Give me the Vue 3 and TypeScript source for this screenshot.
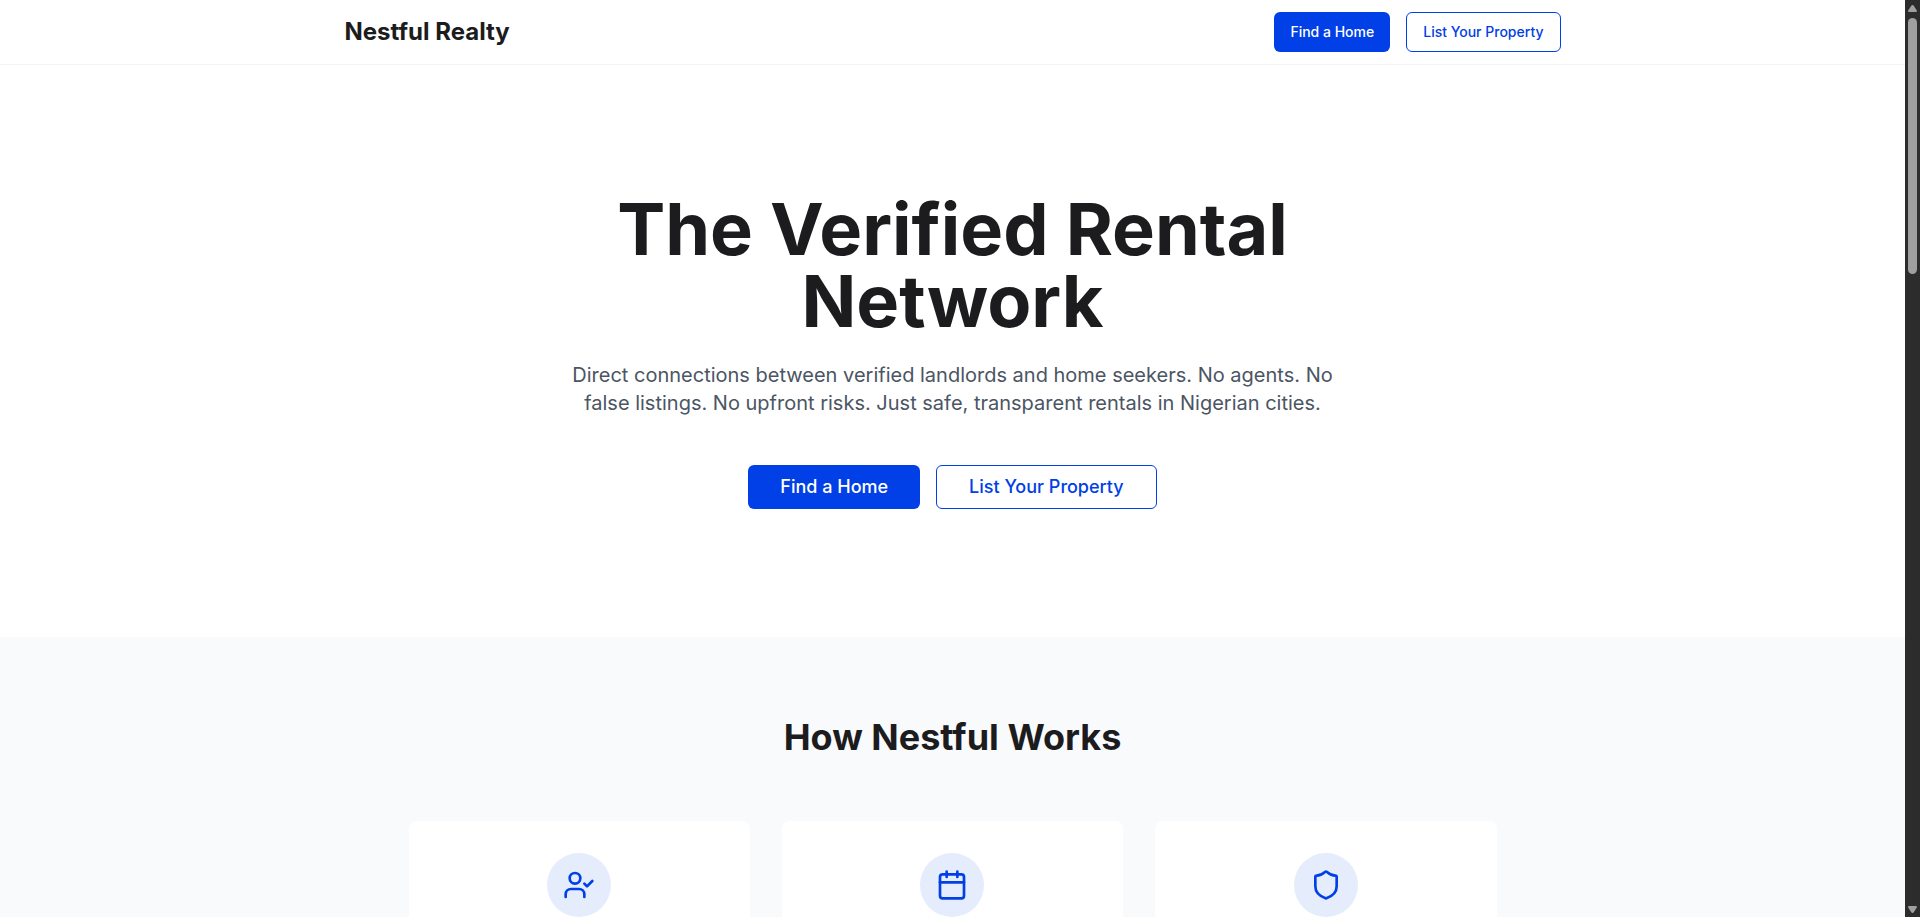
<script setup lang="ts">
type IconName = 'user-check' | 'calendar' | 'shield'

const steps: { icon: IconName }[] = [
  { icon: 'user-check' },
  { icon: 'calendar' },
  { icon: 'shield' },
]
</script>

<template>
  <div class="viewport">
    <div class="page">
      <header class="header">
        <div class="header-inner">
          <span class="brand">Nestful Realty</span>
          <nav class="header-actions">
            <button type="button" class="btn btn-small btn-primary">Find a Home</button>
            <button type="button" class="btn btn-small btn-outline">List Your Property</button>
          </nav>
        </div>
      </header>

      <main>
        <section class="hero">
          <div class="hero-inner">
            <h1 class="hero-title">The Verified Rental Network</h1>
            <p class="hero-text">
              Direct connections between verified landlords and home seekers. No agents. No
              false listings. No upfront risks. Just safe, transparent rentals in Nigerian cities.
            </p>
            <div class="hero-actions">
              <button type="button" class="btn btn-large btn-primary">Find a Home</button>
              <button type="button" class="btn btn-large btn-outline">List Your Property</button>
            </div>
          </div>
        </section>

        <section class="works">
          <div class="works-inner">
            <h2 class="works-title">How Nestful Works</h2>
            <div class="cards">
              <article v-for="step in steps" :key="step.icon" class="card">
                <div class="badge">
                  <svg class="icon" viewBox="0 0 24 24" aria-hidden="true">
                    <template v-if="step.icon === 'user-check'">
                      <path d="m16 11 2 2 4-4" />
                      <path d="M16 21v-2a4 4 0 0 0-4-4H6a4 4 0 0 0-4 4v2" />
                      <circle cx="9" cy="7" r="4" />
                    </template>
                    <template v-else-if="step.icon === 'calendar'">
                      <path d="M8 2v4" />
                      <path d="M16 2v4" />
                      <rect width="18" height="18" x="3" y="4" rx="2" />
                      <path d="M3 10h18" />
                    </template>
                    <path
                      v-else
                      d="M20 13c0 5-3.5 7.5-7.66 8.95a1 1 0 0 1-.67-.01C7.5 20.5 4 18 4 13V6a1 1 0 0 1 1-1c2 0 4.5-1.2 6.24-2.72a1.17 1.17 0 0 1 1.52 0C14.51 3.81 17 5 19 5a1 1 0 0 1 1 1z"
                    />
                  </svg>
                </div>
              </article>
            </div>
          </div>
        </section>
      </main>
    </div>

    <div class="scrollbar" aria-hidden="true">
      <svg class="arrow" viewBox="0 0 9 7"><path d="M4.5 0Q5.3 0 5.8 .8L8.8 5.5Q9.3 7 8 7H1Q-.3 7 .2 5.5L3.2 .8Q3.7 0 4.5 0Z" /></svg>
      <div class="track"><div class="thumb"></div></div>
      <svg class="arrow" viewBox="0 0 9 7"><path d="M4.5 7Q5.3 7 5.8 6.2L8.8 1.5Q9.3 0 8 0H1Q-.3 0 .2 1.5L3.2 6.2Q3.7 7 4.5 7Z" /></svg>
    </div>
  </div>
</template>

<style>
body {
  margin: 0;
}
</style>

<style scoped>
.viewport {
  display: flex;
  height: 100vh;
  overflow: hidden;
  font-family: Inter, "Liberation Sans", sans-serif;
  color: #1c1c1e;
  background: #ffffff;
}

.page {
  flex: 1;
  min-width: 0;
  display: flex;
  flex-direction: column;
  overflow: hidden;
}

.header {
  flex: none;
  border-bottom: 1px solid #f3f4f6;
}

.header-inner {
  box-sizing: border-box;
  max-width: 1280px;
  margin: 0 auto;
  padding: 12px 32px;
  display: flex;
  align-items: center;
  justify-content: space-between;
}

.brand {
  font-size: 24px;
  line-height: 32px;
  font-weight: 700;
}

.header-actions,
.hero-actions {
  display: flex;
  gap: 16px;
}

.hero-actions {
  justify-content: center;
}

.btn {
  box-sizing: border-box;
  border: 1px solid #0040e6;
  border-radius: 6px;
  font-family: inherit;
  font-weight: 500;
  white-space: nowrap;
  cursor: pointer;
}

.btn-primary {
  border: 0;
  background: #0040e6;
  color: #ffffff;
}

.btn-outline {
  background: #ffffff;
  color: #0040e6;
}

.btn-small {
  height: 40px;
  padding: 0 16px;
  font-size: 14px;
  line-height: 20px;
}

.btn-large {
  height: 44px;
  padding: 0 32px;
  font-size: 18px;
  line-height: 28px;
}

main {
  flex: 1;
  display: flex;
  flex-direction: column;
}

.hero {
  padding: 128px 32px;
}

.hero-inner {
  max-width: 832px;
  margin: 0 auto;
  text-align: center;
}

.hero-title {
  margin: 0 0 24px;
  font-size: 72px;
  line-height: 72px;
  font-weight: 700;
}

.hero-text {
  max-width: 768px;
  margin: 0 auto 48px;
  font-size: 20px;
  line-height: 28px;
  color: #4b5563;
}

.works {
  flex: 1;
  padding: 80px 32px;
  background: #f9fafc;
}

.works-inner {
  max-width: 1088px;
  margin: 0 auto;
}

.works-title {
  margin: 0 0 64px;
  font-size: 36px;
  line-height: 40px;
  font-weight: 700;
  text-align: center;
}

.cards {
  display: grid;
  grid-template-columns: repeat(3, 1fr);
  gap: 32px;
}

.card {
  padding: 32px;
  border-radius: 8px;
  background: #ffffff;
}

.badge {
  display: flex;
  align-items: center;
  justify-content: center;
  width: 64px;
  height: 64px;
  margin: 0 auto;
  border-radius: 50%;
  background: #e5ecfc;
}

.icon {
  width: 32px;
  height: 32px;
  fill: none;
  stroke: #0040e6;
  stroke-width: 2;
  stroke-linecap: round;
  stroke-linejoin: round;
}

.scrollbar {
  box-sizing: border-box;
  flex: none;
  width: 15px;
  padding: 5px 3px 4px;
  display: flex;
  flex-direction: column;
  gap: 6px;
  background: #2c2c2c;
}

.arrow {
  flex: none;
  width: 9px;
  height: 7px;
  fill: #9f9f9f;
}

.track {
  flex: 1;
}

.thumb {
  height: 29%;
  border-radius: 5px;
  background: #9f9f9f;
}
</style>
